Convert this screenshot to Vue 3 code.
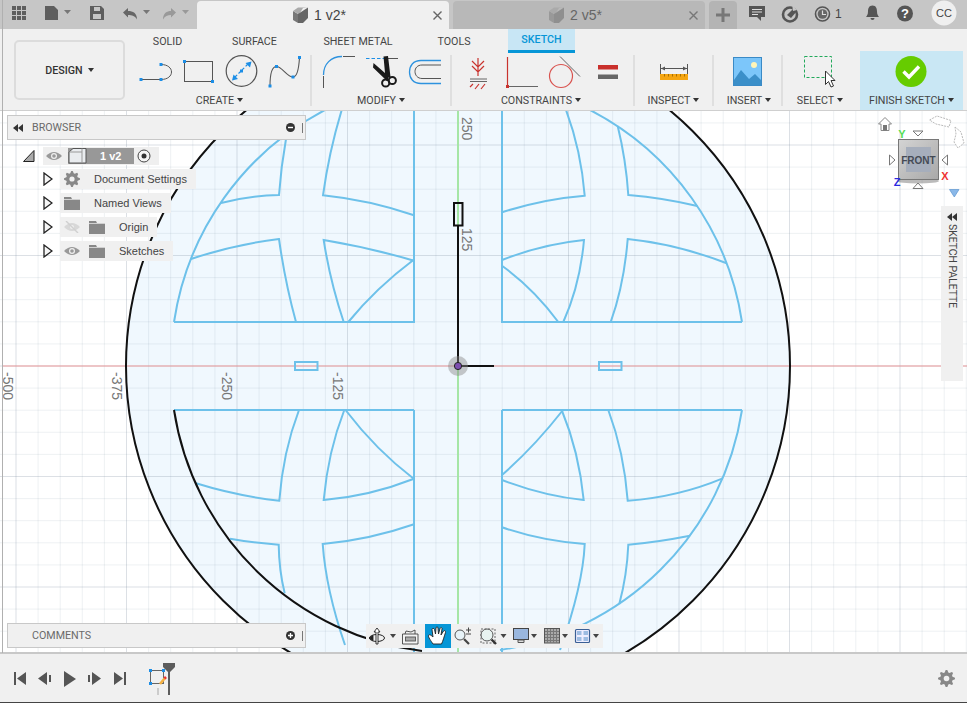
<script setup>
const X0 = 458, Y0 = 366, STEP = 22.1
const vLines = []
const hLines = []
for (let i = -21; i <= 23; i++) vLines.push({ p: X0 + i * STEP, major: i % 5 === 0 })
for (let i = -12; i <= 13; i++) hLines.push({ p: Y0 + i * STEP, major: i % 5 === 0 })

function gear(cx, cy, r, teeth = 8) {
  const pts = []
  const n = teeth * 4
  for (let i = 0; i < n; i++) {
    const a = ((i - 0.5) / n) * Math.PI * 2
    const rr = i % 4 < 2 ? r : r * 0.74
    pts.push((cx + rr * Math.cos(a)).toFixed(2) + ' ' + (cy + rr * Math.sin(a)).toFixed(2))
  }
  return 'M' + pts.join('L') + 'Z'
}

const blue = [
  'M414 105V322H174', 'M502 105V322H742',
  'M174 322A287 287 0 0 1 325 110', 'M742 322A287 287 0 0 0 590 110',
  'M221 203Q250 195.6 279 195Q281 167 286 139',
  'M191 259Q234 244.5 279 239Q285 282 296 322',
  'M341.7 110Q329 152 323 195.3Q369 200 414 215.3',
  'M414 260.7Q369 247.5 323.7 240Q330 281 343.7 322',
  'M348.3 322Q376 288 414 259.5',
  'M502 212.3Q543 199 584.7 195.7Q581 150 566 110',
  'M617.7 126Q626 160 628.3 195Q664 198 697.3 206',
  'M502 260Q543 244 584 240Q580 285 563.3 322',
  'M726.7 263.3Q677 244 627.7 239Q624 285 610.7 322',
  'M502 265.7Q534 289 558.3 322',
  'M414 410V653', 'M502 410V653', 'M174 410H414', 'M502 410H742',
  'M299 410Q283 452 279.3 500.7Q237 496 196 483.3',
  'M344.3 410Q328 452 323.7 500Q370 496 414 478.7',
  'M345.5 410Q376 450 414 479',
  'M230 538.7Q254 543 278.7 544.7Q279 570 284.7 593.3',
  'M414 524.3Q369 540 322.7 544Q326 590 345 645',
  'M608.3 410Q624 452 627.7 500.7Q678 497 722.7 478.3',
  'M561.7 410Q579 452 583.7 500Q544 496 502 480',
  'M563 410Q534 447 502 475',
  'M502 527.3Q542 541 584.7 544Q583 585 560 650',
  'M690 535.7Q658 542 628.3 544.7Q627 575 619.3 604',
  'M742 410A287 287 0 0 1 500 650'
]

const axisLabels = [
  { x: 462, y: 117, t: '250' }, { x: 462, y: 228, t: '125' },
  { x: 333, y: 372, t: '-125' }, { x: 222, y: 372, t: '-250' },
  { x: 111.5, y: 372, t: '-375' }, { x: 3, y: 372, t: '-500' }
]
const tabs = [
  { t: 'SOLID', c: 'w64' }, { t: 'SURFACE', c: 'w109' },
  { t: 'SHEET METAL', c: 'w98' }, { t: 'TOOLS', c: 'w94' }
]
const ticks = [664, 668, 672, 676, 680, 684]
const grid9 = [12, 17, 22]
const gridX = [547, 550, 553, 556]
const gridY = [631, 634, 637, 640]
</script>

<template>
  <div class="app">
    <header class="topbar">
      <svg class="tb-left" viewBox="0 0 197 29" width="197" height="29">
        <g fill="#5e5e5e">
          <template v-for="x in grid9" :key="x">
            <rect v-for="y in [6,11,16]" :key="y" :x="x" :y="y" width="4" height="4" />
          </template>
          <path d="M45 6h9l4 4v10H45z" />
          <path d="M64 10h7l-3.500 4z" fill="#777" />
          <path d="M90 6h11l3 3v11H90z" />
          <rect x="94" y="7" width="6" height="4" fill="#c6c6c6" />
          <rect x="93" y="14" width="8" height="5" fill="#c6c6c6" />
          <path d="M123 12.500l5-4.500v3c5 0 9 2 9 8.500-2-3.500-5-4.500-9-4.500v2.500z" fill="#666" />
          <path d="M143 10h7l-3.500 4z" fill="#777" />
          <path d="M176 12.500l-5-4.500v3c-4 0-8 2-8 8.500 2-3.500 4.500-4.500 8-4.500v2.500z" fill="#999" />
          <path d="M182 10h7l-3.500 4z" fill="#999" />
        </g>
      </svg>
      <div class="tab active">
        <svg class="cube" viewBox="0 0 16 16" width="16" height="16">
          <path d="M1 4l5 3v9l-5-3z" fill="#777" /><path d="M1 4l5-3.500h10l-5 .5-4 6.500z" fill="#aaa" /><path d="M6 7L16 .5V11l-5 5H6z" fill="#666" />
        </svg>
        <span class="tab-name">1 v2*</span>
        <svg class="close" viewBox="0 0 9 9" width="9" height="9"><path d="M.5 .5l8 8M8.500 .5l-8 8" stroke="#666" stroke-width="1.400" /></svg>
      </div>
      <div class="tab inactive">
        <svg class="cube" viewBox="0 0 16 16" width="16" height="16">
          <path d="M1 4l5 3v9l-5-3z" fill="#999" /><path d="M1 4l5-3.500h10l-5 .5-4 6.500z" fill="#aaa" /><path d="M6 7L16 .5V11l-5 5H6z" fill="#8f8f8f" />
        </svg>
        <span class="tab-name">2 v5*</span>
        <svg class="close" viewBox="0 0 9 9" width="9" height="9"><path d="M.5 .5l8 8M8.500 .5l-8 8" stroke="#777" stroke-width="1.400" /></svg>
      </div>
      <div class="tab plus">
        <svg viewBox="0 0 14 14" width="14" height="14"><path d="M7 0v14M0 7h14" stroke="#777" stroke-width="3" /></svg>
      </div>
      <svg class="tb-right" viewBox="737 0 230 29" width="230" height="29">
        <path d="M749 6h16v11h-4v4l-4-4h-8z" fill="#555" />
        <path d="M752 9.500h10M752 12h10M752 14.500h6" stroke="#ddd" stroke-width="1" />
        <circle cx="790" cy="14.500" r="7" fill="none" stroke="#555" stroke-width="2.600" />
        <path d="M787 15l7-7 3 3-6 7z" fill="#555" /><path d="M792 4l5 6-4 1z" fill="#c6c6c6" />
        <circle cx="822.500" cy="14" r="7" fill="none" stroke="#555" stroke-width="1.600" />
        <circle cx="822.500" cy="14" r="4.800" fill="#666" />
        <path d="M822.500 10.500V14.500H826" fill="none" stroke="#ddd" stroke-width="1.200" />
        <text x="835" y="18" class="svg-txt" font-size="12" fill="#444">1</text>
        <path d="M872.500 5.500c3.500 0 4.500 3 4.500 6s1 4 2 5.500h-13c1-1.500 2-2.500 2-5.500s1-6 4.500-6z" fill="#555" />
        <path d="M870.500 18h4a2 2 0 0 1-4 0z" fill="#555" />
        <circle cx="905" cy="13.500" r="8" fill="#555" />
        <text x="905" y="18" class="svg-txt" text-anchor="middle" font-size="13" font-weight="700" fill="#fff">?</text>
        <circle cx="944" cy="13" r="12.500" fill="#efefef" />
        <text x="944" y="17" class="svg-txt" text-anchor="middle" font-size="11" fill="#444">CC</text>
      </svg>
    </header>

    <section class="ribbon">
      <div class="design-wrap">
        <div class="design-btn">
          <span>DESIGN</span>
          <i class="caret"></i>
        </div>
      </div>
      <div class="ribbon-main">
        <nav class="tabs">
          <span v-for="t in tabs" :key="t.t" class="rtab" :class="t.c">{{ t.t }}</span>
          <span class="rtab sketch">SKETCH</span>
        </nav>
        <div class="groups">
          <div class="group g175">
            <svg viewBox="135 53 175 40" width="175" height="40">
              <g fill="none" stroke="#555" stroke-width="1">
                <path d="M141 79.500H161M161 64.500C175 64.500 175 79.500 161 79.500" />
                <rect x="184.500" y="61.500" width="28" height="20" />
                <circle cx="241.500" cy="71" r="15.300" stroke-width="1.200" />
                <path d="M270 86C270 72 273 66.500 276.500 66.500C282 66.500 287 77 293 77C298 77 299 66 299.500 57.500" stroke-width="1.100" />
              </g>
              <g fill="#1c8ee6">
                <rect x="139.500" y="78" width="3" height="3" /><rect x="159.500" y="78" width="3" height="3" /><rect x="159.500" y="63" width="3" height="3" />
                <rect x="183" y="60" width="3" height="3" /><rect x="211" y="80" width="3" height="3" />
                <rect x="240" y="69.500" width="3" height="3" />
                <path d="M232 80.500l1.500-6 4.500 4.500zM251.500 61.500l-1.500 6-4.500-4.500z" />
                <rect x="268.500" y="84.500" width="3" height="3" /><rect x="275" y="65" width="3" height="3" /><rect x="291.500" y="75.500" width="3" height="3" /><rect x="298" y="56" width="3" height="3" />
              </g>
              <path d="M235 77l13-13" stroke="#1c8ee6" stroke-width="1.200" stroke-dasharray="3 2" />
            </svg>
            <div class="glabel nudge-l6">CREATE<i class="caret"></i></div>
          </div>
          <i class="sep"></i>
          <div class="group g138">
            <svg viewBox="312 53 138 40" width="138" height="40">
              <path d="M323.500 75C323.500 64 331 56.500 342 56.500" fill="none" stroke="#2d92de" stroke-width="1.300" />
              <path d="M323.500 76V88M343 56.500H355" stroke="#555" fill="none" />
              <path d="M366 58.500H384" stroke="#1c8ee6" stroke-dasharray="3.500 2" fill="none" />
              <path d="M388 58.500H398" stroke="#555" fill="none" />
              <path d="M383.500 56.500l4.500-.500 2.500 21-5 1.500zM373.500 63l15.500 13.500-2 4.500-14-13.500z" fill="#1a1a1a" />
              <circle cx="385.700" cy="83" r="3.600" fill="none" stroke="#1a1a1a" stroke-width="2" />
              <circle cx="392.300" cy="80.500" r="3.600" fill="none" stroke="#1a1a1a" stroke-width="2" />
              <path d="M441 60.500H421C413 60.500 409.500 66 409.500 72S413 83.500 421 83.500H441" fill="none" stroke="#2d92de" stroke-width="1.300" />
              <path d="M441 65H422C417.500 65 415 68 415 71.500S417.500 78.500 422 78.500H441" fill="none" stroke="#555" />
            </svg>
            <div class="glabel">MODIFY<i class="caret"></i></div>
          </div>
          <i class="sep"></i>
          <div class="group g181">
            <svg viewBox="452 53 181 40" width="181" height="40">
              <path d="M478 58V76M472 61l6 6 6-6M472 66l6 6 6-6M473 84l-3 3M479 84l-4 5M485 84l-4 5" stroke="#c9332e" stroke-width="1.200" fill="none" />
              <path d="M470 79H487M470 81.500H487" stroke="#666" fill="none" />
              <path d="M507.500 57V85" stroke="#c9332e" stroke-width="1.200" fill="none" />
              <path d="M509 86.500H538" stroke="#666" fill="none" />
              <rect x="506" y="85" width="3" height="3" fill="#c9332e" />
              <circle cx="561" cy="76" r="11.500" fill="none" stroke="#d9534f" stroke-width="1.200" />
              <path d="M560 56.500L580 76.500" stroke="#666" fill="none" />
              <rect x="598" y="65" width="20" height="4.500" fill="#c9302c" />
              <rect x="598" y="74.500" width="20" height="4.500" fill="#666" />
            </svg>
            <div class="glabel nudge-l3">CONSTRAINTS<i class="caret"></i></div>
          </div>
          <i class="sep"></i>
          <div class="group g77">
            <svg viewBox="635 53 77 40" width="77" height="40">
              <path d="M660.500 64V74M687.500 64V74M661 68.500H687" stroke="#555" fill="none" />
              <path d="M661 68.500l4-2v4zM687 68.500l-4-2v4z" fill="#555" />
              <rect x="660" y="74" width="28" height="6" fill="#f5a511" />
              <path v-for="x in ticks" :key="x" :d="'M' + x + '.5 74v2.500'" stroke="#a86f00" fill="none" />
            </svg>
            <div class="glabel">INSPECT<i class="caret"></i></div>
          </div>
          <i class="sep"></i>
          <div class="group g67">
            <svg viewBox="714 53 67 40" width="67" height="40">
              <rect x="733.500" y="57.500" width="28" height="28" fill="#7cc6fa" stroke="#3a8ac6" />
              <circle cx="754" cy="65" r="3" fill="#fff5b8" />
              <path d="M734 80L741 70 749 79 755 74 761 80V85H734z" fill="#3b8fc9" />
            </svg>
            <div class="glabel nudge-r3">INSERT<i class="caret"></i></div>
          </div>
          <i class="sep"></i>
          <div class="group g77">
            <svg viewBox="783 53 77 40" width="77" height="40">
              <rect x="804.500" y="56.500" width="27" height="21" fill="none" stroke="#21a95a" stroke-dasharray="3 2" />
              <path d="M825.500 71V84.500L828.500 81.500 831 87 833.500 86 831 80.500H835z" fill="#fff" stroke="#333" />
            </svg>
            <div class="glabel nudge-l3">SELECT<i class="caret"></i></div>
          </div>
          <div class="group finish">
            <svg viewBox="860 53 103 40" width="103" height="40">
              <circle cx="911" cy="71.500" r="15.500" fill="#66cc00" />
              <path d="M903.500 71.500L909 77 919 66.500" fill="none" stroke="#fff" stroke-width="3.400" />
            </svg>
            <div class="glabel">FINISH SKETCH<i class="caret"></i></div>
          </div>
        </div>
      </div>
    </section>

    <main class="canvas">
      <svg class="scene" viewBox="0 111 967 541" width="967" height="541">
        <circle :cx="X0" :cy="Y0" r="332" fill="#f0f8fe" />
        <g>
          <path v-for="l in vLines" :key="'v' + l.p" :d="`M${l.p} 110V653`" stroke="#778899" :stroke-opacity="l.major ? 0.26 : 0.12" fill="none" />
          <path v-for="l in hLines" :key="'h' + l.p" :d="`M0 ${l.p}H967`" stroke="#778899" :stroke-opacity="l.major ? 0.26 : 0.12" fill="none" />
        </g>
        <path d="M3 366H967" stroke="#ee9b9b" stroke-width="1.200" fill="none" />
        <path d="M458 110V653" stroke="#a6e6a6" stroke-width="2" fill="none" />
        <g fill="none" stroke="#6dc1ea" stroke-width="2">
          <path v-for="d in blue" :key="d" :d="d" />
          <rect x="295" y="362" width="22.500" height="8" />
          <rect x="599" y="362" width="22.500" height="8" />
        </g>
        <g fill="none" stroke="#111" stroke-width="2">
          <circle :cx="X0" :cy="Y0" r="332" />
          <path d="M174 410A287 287 0 0 0 422 651" />
          <path d="M458 366V225" />
          <path d="M458 366H494" />
          <rect x="454" y="203" width="8.500" height="22.500" />
        </g>
        <circle :cx="X0" :cy="Y0" r="10" fill="#888" fill-opacity=".45" />
        <circle :cx="X0" :cy="Y0" r="3.600" fill="#7d4fb0" stroke="#222" />
        <text v-for="a in axisLabels" :key="a.t" class="svg-txt" :transform="`translate(${a.x} ${a.y}) rotate(90)`" font-size="14" fill="#777">{{ a.t }}</text>
      </svg>

      <div class="panel browser">
        <svg class="rew" viewBox="0 0 10 8" width="10" height="8"><path d="M5 0v8L0 4zM10 0v8L5 4z" fill="#333" /></svg>
        <span class="panel-title">BROWSER</span>
        <svg class="pbtn" viewBox="0 0 9 9" width="9" height="9"><circle cx="4.500" cy="4.500" r="4.500" fill="#333" /><path d="M2 4.500h5" stroke="#fff" stroke-width="1.400" /></svg>
        <i class="grip"></i>
      </div>

      <div class="tree">
        <div class="root-row">
          <svg class="tri" viewBox="0 0 12 12" width="12" height="12"><path d="M.5 11.500L11 .5V11.500z" fill="#aaa" stroke="#222" /></svg>
          <div class="root-node">
            <svg viewBox="0 0 16 10" width="16" height="10" class="eye"><path d="M0 5Q8-3 16 5Q8 13 0 5z" fill="#999" /><circle cx="8" cy="5" r="3" fill="#efefef" /><circle cx="8" cy="5" r="1.800" fill="#999" /></svg>
            <div class="comp">
              <svg viewBox="0 0 19 16" width="19" height="16"><path d="M1 4l4-3.500h13V15H1z" fill="#e9ecef" stroke="#555" /><path d="M14 .5V15M1 4h13" stroke="#999" fill="none" /></svg>
              <span>1 v2</span>
            </div>
            <svg viewBox="0 0 14 14" width="14" height="14" class="radio"><circle cx="7" cy="7" r="6" fill="#f6f6f6" stroke="#444" /><circle cx="7" cy="7" r="2.500" fill="#333" /></svg>
          </div>
        </div>
        <div class="row">
          <svg class="arrow" viewBox="0 0 10 14" width="10" height="14"><path d="M1 1L9 7 1 13z" fill="#f6f6f6" stroke="#222" stroke-width="1.300" /></svg>
          <div class="node">
            <svg viewBox="0 0 16 16" width="16" height="16"><path :d="gear(8, 8, 8, 8)" fill="#888" /><circle cx="8" cy="8" r="2.600" fill="#f0f0f0" /></svg>
            <span>Document Settings</span>
          </div>
        </div>
        <div class="row">
          <svg class="arrow" viewBox="0 0 10 14" width="10" height="14"><path d="M1 1L9 7 1 13z" fill="#f6f6f6" stroke="#222" stroke-width="1.300" /></svg>
          <div class="node">
            <svg viewBox="0 0 16 14" width="16" height="14"><path d="M0 1h7l1 2h8v11H0z" fill="#888" /><path d="M0 3.500h16" stroke="#f0f0f0" stroke-width=".7" /></svg>
            <span>Named Views</span>
          </div>
        </div>
        <div class="row">
          <svg class="arrow" viewBox="0 0 10 14" width="10" height="14"><path d="M1 1L9 7 1 13z" fill="#f6f6f6" stroke="#222" stroke-width="1.300" /></svg>
          <div class="node">
            <svg viewBox="0 0 16 12" width="16" height="12"><path d="M0 6Q8-2 16 6Q8 14 0 6z" fill="#d8d8d8" /><circle cx="8" cy="6" r="2" fill="#f0f0f0" /><path d="M2 0l12 12" stroke="#d0d0d0" stroke-width="1.400" /></svg>
            <svg class="folder2" viewBox="0 0 16 14" width="16" height="14"><path d="M0 1h7l1 2h8v11H0z" fill="#888" /><path d="M0 3.500h16" stroke="#f0f0f0" stroke-width=".7" /></svg>
            <span>Origin</span>
          </div>
        </div>
        <div class="row">
          <svg class="arrow" viewBox="0 0 10 14" width="10" height="14"><path d="M1 1L9 7 1 13z" fill="#f6f6f6" stroke="#222" stroke-width="1.300" /></svg>
          <div class="node">
            <svg viewBox="0 0 16 10" width="16" height="10"><path d="M0 5Q8-3 16 5Q8 13 0 5z" fill="#999" /><circle cx="8" cy="5" r="3" fill="#f0f0f0" /><circle cx="8" cy="5" r="1.800" fill="#999" /></svg>
            <svg class="folder2" viewBox="0 0 16 14" width="16" height="14"><path d="M0 1h7l1 2h8v11H0z" fill="#888" /><path d="M0 3.500h16" stroke="#f0f0f0" stroke-width=".7" /></svg>
            <span>Sketches</span>
          </div>
        </div>
      </div>

      <div class="panel comments">
        <span class="panel-title">COMMENTS</span>
        <svg class="pbtn" viewBox="0 0 9 9" width="9" height="9"><circle cx="4.500" cy="4.500" r="4.500" fill="#333" /><path d="M2 4.500h5M4.500 2v5" stroke="#fff" stroke-width="1.300" /></svg>
        <i class="grip"></i>
      </div>

      <svg class="viewcube" viewBox="872 112 95 90" width="95" height="90">
        <path d="M885 117.500L878.500 124H881V130.500H889V124H891.500z" fill="#fff" stroke="#888" />
        <rect x="883" y="125" width="4" height="5.500" fill="#777" />
        <path d="M929.500 120L937 116 951 120.500 949 127 936 124z" fill="#fff" stroke="#bbb" stroke-dasharray="2 1" />
        <path d="M955 127L961 132 964 143 958 148 954 142 956 134z" fill="#fff" stroke="#bbb" stroke-dasharray="2 1" />
        <ellipse cx="918" cy="181" rx="21" ry="2.500" fill="#555" fill-opacity=".4" />
        <defs>
          <linearGradient id="cubeface" x1="0" y1="0" x2="1" y2="1"><stop offset="0" stop-color="#d4d4d4" /><stop offset="1" stop-color="#a8a8a8" /></linearGradient>
        </defs>
        <rect x="898.500" y="139.500" width="40" height="40" fill="url(#cubeface)" stroke="#777" />
        <rect x="906" y="147" width="25" height="25" fill="#a6aebc" />
        <text x="918.500" y="163.500" text-anchor="middle" class="svg-txt" font-size="10" font-weight="700" fill="#444a55">FRONT</text>
        <path d="M913 131H923L918 136zM913 188.500H923L918 183zM889.500 155V165L895 160zM947.500 155V165L942 160z" fill="#fff" stroke="#777" />
        <text x="902" y="138" text-anchor="middle" class="svg-txt" font-size="11" font-weight="700" fill="#55dd55">Y</text>
        <text x="945" y="180" text-anchor="middle" class="svg-txt" font-size="11" font-weight="700" fill="#ee3333">X</text>
        <text x="897" y="186" text-anchor="middle" class="svg-txt" font-size="11" font-weight="700" fill="#2a2ae0">Z</text>
        <path d="M949.500 189.500H959L954.300 197z" fill="#8ab8e8" stroke="#5d95d0" stroke-width=".7" />
      </svg>

      <aside class="palette">
        <svg viewBox="0 0 10 8" width="10" height="8"><path d="M5 0v8L0 4zM10 0v8L5 4z" fill="#333" /></svg>
        <span>SKETCH PALETTE</span>
      </aside>

      <svg class="navbar" viewBox="366 624 237 24" width="237" height="24">
        <rect x="425" y="624" width="26" height="24" fill="#0696d7" />
        <g stroke="#222" fill="#fff" stroke-width=".9">
          <ellipse cx="377" cy="638" rx="7.500" ry="3.500" fill="none" stroke-width="1" />
          <path d="M377 628l-3 4h2v12h2v-12h2z" />
          <path d="M369 638l4-2.500v5z" fill="#222" />
          <path d="M402.500 634H418V644H402.500z" fill="#f3f3f3" stroke="#444" />
          <rect x="405.500" y="637" width="10" height="4" fill="#aaa" stroke="#555" />
          <path d="M405 634l1-3 5 1 4-2v4" fill="none" stroke="#444" />
          <path d="M433 644C431 641 428 637 428.500 635.500C429 634 431 635 433 637L432 629.500C432 628 434 628 434.500 629.500L435.500 634L436 628C436 626.500 438 626.500 438 628L438.500 634L440 628.500C440.500 627 442.500 627.500 442 629L441 635L443.500 631C444.500 630 446 631 445.500 632.500C444 637 443 641 441.500 644Z" />
        </g>
        <g>
          <circle cx="460" cy="635" r="5" fill="#e8f3f8" stroke="#555" />
          <path d="M464 639L469 644" stroke="#444" stroke-width="2.200" />
          <path d="M466 630h5M468.500 627.500v5M466 634h5" stroke="#444" fill="none" />
          <rect x="481" y="629" width="14" height="14" fill="none" stroke="#666" stroke-dasharray="2 1.500" />
          <circle cx="487" cy="635" r="6" fill="#e8f3f0" stroke="#555" />
          <path d="M491.500 639.500L496 644" stroke="#333" stroke-width="2.400" />
          <rect x="513.500" y="628.500" width="15" height="11" fill="#9ab7de" stroke="#444" />
          <path d="M518 640H524V642.500H518z" fill="#ddd" stroke="#555" />
          <rect x="544.500" y="628.500" width="15" height="14.500" fill="#aaa" stroke="#555" />
          <path v-for="x in gridX" :key="'gx' + x" :d="`M${x}.500 629V643`" stroke="#777" fill="none" />
          <path v-for="y in gridY" :key="'gy' + y" :d="`M545 ${y}.500H559`" stroke="#777" fill="none" />
          <rect x="575.500" y="629.500" width="14" height="13" rx="1" fill="#eef" stroke="#3a5f95" stroke-width="1.200" />
          <path d="M577 631h4.500v4H577zM583.500 631H588v4h-4.500zM577 637h4.500v4H577zM583.500 637H588v4h-4.500z" fill="#9dbce2" />
        </g>
        <path d="M390 634h6l-3 4zM500.500 634h6l-3 4zM531 634h6l-3 4zM562 634h6l-3 4zM593 634h6l-3 4z" fill="#444" />
      </svg>
    </main>

    <footer class="timeline">
      <svg viewBox="0 654 180 48" width="180" height="48">
        <g fill="#555">
          <path d="M14 672h2v13h-2zM26 672v13l-9-6.500z" />
          <path d="M47 672v13l-9-6.500zM49 675h2v7h-2z" />
          <path d="M64 671l12 8-12 8z" />
          <path d="M92 672v13l9-6.500zM88 675h2v7h-2z" />
          <path d="M114 672v13l9-6.500zM124 672h2v13h-2z" />
        </g>
        <rect x="150.500" y="670.500" width="13" height="13" fill="none" stroke="#666" />
        <g fill="#1c8ee6">
          <rect x="149" y="669" width="3" height="3" /><rect x="162" y="669" width="3" height="3" /><rect x="149" y="682" width="3" height="3" />
        </g>
        <path d="M160 684L165 678" stroke="#f5b041" stroke-width="2.600" />
        <path d="M164.500 678.500l1.500-1.500" stroke="#e33" stroke-width="2.600" />
        <rect x="157" y="688" width="2" height="7" fill="#ccc" />
        <path d="M163 663H175V667L170 672V695H168V672L163 667z" fill="#5c5c5c" />
      </svg>
      <svg class="settings" viewBox="0 0 17 17" width="17" height="17"><path :d="gear(8.5, 8.5, 8.5, 8)" fill="#888" /><circle cx="8.500" cy="8.500" r="2.800" fill="#f0f0f0" /></svg>
    </footer>
    <i class="edge"></i>
  </div>
</template>

<style scoped>
.app {
  position: relative;
  display: flex;
  flex-direction: column;
  width: 967px;
  height: 703px;
  overflow: hidden;
  background: #fff;
  font-family: "Roboto", "Liberation Sans", sans-serif;
  color: #444;
}
.edge {
  position: absolute;
  left: 2px;
  top: 0;
  width: 1px;
  height: 653px;
  background: #b0b0b0;
}
.svg-txt {
  font-family: "Liberation Sans", sans-serif;
}
.topbar {
  display: flex;
  flex: 0 0 29px;
  background: #c6c6c6;
}
.tb-left, .tb-right {
  flex: none;
}
.tab {
  display: flex;
  align-items: center;
  width: 252px;
  height: 28px;
  margin-top: 1px;
  padding: 0 7px 0 95px;
  box-sizing: border-box;
  border-radius: 4px 4px 0 0;
}
.tab.active {
  background: #f0f0f0;
  margin-right: 4px;
}
.tab.inactive {
  background: #b8b8b8;
  margin-right: 4px;
  color: #666;
}
.tab.plus {
  width: 28px;
  padding: 0;
  justify-content: center;
  background: #b4b4b4;
}
.tab-name {
  margin-left: 6px;
  font: 14px "Liberation Sans", sans-serif;
}
.close {
  margin-left: auto;
}
.ribbon {
  display: flex;
  flex: 0 0 82px;
  box-sizing: border-box;
  background: #f0f0f0;
  border-bottom: 1px solid #cfcfcf;
}
.design-wrap {
  flex: 0 0 135px;
  padding: 11px 0 0 14px;
  box-sizing: border-box;
}
.design-btn {
  display: flex;
  align-items: center;
  justify-content: center;
  gap: 5px;
  width: 111px;
  height: 60px;
  box-sizing: border-box;
  border: 2px solid #dcdcdc;
  border-radius: 5px;
  font-size: 10.700px;
  font-weight: 500;
  color: #333;
}
.caret {
  display: inline-block;
  width: 0;
  height: 0;
  margin-left: 3px;
  border-left: 3.500px solid transparent;
  border-right: 3.500px solid transparent;
  border-top: 4px solid #333;
  vertical-align: 2px;
}
.design-btn .caret {
  margin-left: 0;
}
.ribbon-main {
  display: flex;
  flex-direction: column;
  flex: 1;
}
.tabs {
  display: flex;
  flex: 0 0 24px;
  font-size: 10.700px;
}
.rtab {
  display: flex;
  align-items: center;
  justify-content: center;
  box-sizing: border-box;
  color: #444;
}
.w64 { width: 65px; }
.w109 { width: 109px; }
.w98 { width: 98px; }
.w94 { width: 94px; }
.rtab.sketch {
  width: 67px;
  margin-left: 7px;
  background: #c8e6f5;
  border-bottom: 3px solid #0696d7;
  color: #0696d7;
  font-weight: 500;
}
.groups {
  display: flex;
  flex: 1;
}
.group {
  display: flex;
  flex-direction: column;
  flex: none;
}
.g175 { width: 175px; }
.g138 { width: 138px; }
.g181 { width: 181px; }
.g77 { width: 77px; }
.g67 { width: 67px; }
.finish {
  width: 103px;
  margin-top: -2px;
  padding-top: 2px;
  background: #c9e7f4;
}
.glabel {
  text-align: center;
  margin-top: 1px;
  font-size: 10.700px;
  line-height: 14px;
  color: #444;
  white-space: nowrap;
}
.nudge-l6 { padding-right: 6px; }
.nudge-l3 { padding-right: 3px; }
.nudge-r3 { padding-left: 3px; }
.glabel .caret {
  border-top-color: #333;
}
.sep {
  flex: 0 0 2px;
  height: 51px;
  margin-top: 2px;
  background: #dfdfdf;
}
.canvas {
  position: relative;
  flex: 1;
  overflow: hidden;
}
.scene {
  display: block;
}
.panel {
  position: absolute;
  left: 7px;
  display: flex;
  align-items: center;
  width: 299px;
  height: 25px;
  box-sizing: border-box;
  background: #f0f0f0;
  border: 1px solid #c8c8c8;
}
.browser { top: 4px; }
.comments { top: 512px; }
.rew {
  position: absolute;
  left: 5px;
}
.panel-title {
  margin-left: 24px;
  font-size: 10.700px;
  color: #6a6a6a;
}
.pbtn {
  margin-left: auto;
  margin-right: 7px;
}
.grip {
  width: 1px;
  height: 10px;
  margin-right: 2px;
  background: #777;
}
.tree {
  position: absolute;
  left: 23px;
  top: 36px;
  display: flex;
  flex-direction: column;
  gap: 4px;
  font: 11px "Liberation Sans", sans-serif;
  color: #444;
}
.root-row {
  display: flex;
  align-items: center;
  height: 18px;
}
.tri {
  margin-right: 8px;
}
.root-node {
  display: flex;
  align-items: center;
  width: 116px;
  height: 18px;
  background: #efefef;
}
.eye {
  margin-left: 3px;
}
.comp {
  display: flex;
  align-items: center;
  width: 66px;
  height: 16px;
  margin-left: 6px;
  background: #989898;
  color: #fff;
  font-weight: 700;
}
.comp span {
  margin-left: 13px;
}
.radio {
  margin-left: 3px;
}
.row {
  display: flex;
  align-items: center;
  height: 20px;
  margin-left: 20px;
}
.arrow {
  margin-right: 7px;
}
.node {
  display: flex;
  align-items: center;
  height: 20px;
  padding: 0 9px 0 4px;
  background: #f0f0f0;
}
.node span {
  margin-left: 14px;
}
.folder2 {
  margin-left: 9px;
}
.viewcube {
  position: absolute;
  left: 872px;
  top: 1px;
}
.palette {
  position: absolute;
  left: 941px;
  top: 95px;
  display: flex;
  flex-direction: column;
  align-items: center;
  width: 22px;
  height: 175px;
  padding-top: 7px;
  box-sizing: border-box;
  background: #f0f0f0;
}
.palette span {
  margin-top: 3px;
  writing-mode: vertical-rl;
  font-size: 10.400px;
  white-space: nowrap;
  color: #444;
}
.navbar {
  position: absolute;
  left: 366px;
  top: 513px;
  background: #f0f0f0;
}
.timeline {
  display: flex;
  align-items: center;
  justify-content: space-between;
  flex: 0 0 51px;
  box-sizing: border-box;
  background: #f0f0f0;
  border-top: 2px solid #c8c8c8;
  border-bottom: 1px solid #444;
}
.settings {
  margin-right: 12px;
}
</style>
<style>
html, body { margin: 0; padding: 0; background: #fff; }
</style>
